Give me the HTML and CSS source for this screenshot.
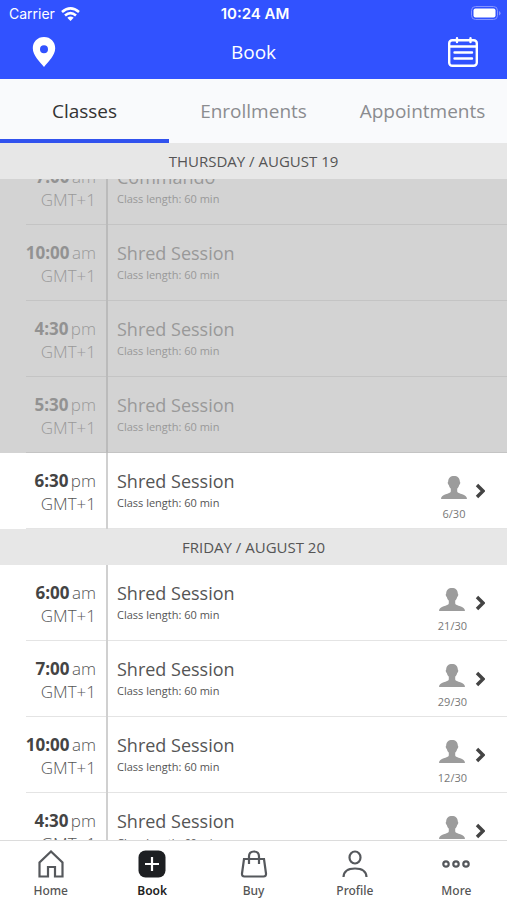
FILE: index.html
```
<!DOCTYPE html>
<html lang="en">

  <head>
    <meta charset="UTF-8">
    <meta name="viewport" content="width=device-width, initial-scale=1.0">
    <title>Book</title>
    <link rel="stylesheet" href="styles.css">
  </head>

  <body>
    <!-- icons used more than once -->
    <svg class="sprite" aria-hidden="true">
      <symbol id="person" viewBox="0 0 26 23">
        <path d="M13 0C9.500 0 7.200 2 7.200 5.500C6.300 6 6.800 8.600 7.800 9C8.100 10.600 8.800 11.700 9.800 12.600V15.500C9.300 18.300 0 17.600 0 23H26C26 17.600 16.700 18.300 16.200 15.500V12.600C17.200 11.700 17.900 10.600 18.200 9C19.200 8.600 19.700 6 18.800 5.500C18.800 2 16.500 0 13 0Z" fill="#9c9c9c"/>
      </symbol>
      <symbol id="arrow" viewBox="0 0 10 16">
        <path d="M2 2L8 8L2 14" fill="none" stroke="#444" stroke-width="3.400"/>
      </symbol>
    </svg>

    <header class="top">
      <div class="status">
        <div class="carrier">
          <span>Carrier</span>
          <svg width="19" height="14" viewBox="0 0 19 14" fill="none" stroke="#fff" stroke-width="2.600">
            <path d="M1 5Q9.500-2.200 18 5"/>
            <path d="M4 8.600Q9.500 3.800 15 8.600"/>
            <path d="M6.300 10.800Q9.500 8 12.700 10.800L9.500 13.900Z" fill="#fff" stroke="none"/>
          </svg>
        </div>
        <div class="clock">10:24 AM</div>
        <div class="battery">
          <svg width="30" height="15" viewBox="0 0 30 15">
            <rect x="0.500" y="0.500" width="26" height="13" rx="4" fill="none" stroke="#8494ff"/>
            <rect x="2.500" y="2.500" width="22" height="9" rx="2" fill="#fff"/>
            <path d="M28 5V9.500Q29.600 8.500 29.600 7.200T28 5Z" fill="#8494ff"/>
          </svg>
        </div>
      </div>
      <div class="titlebar">
        <button type="button" class="icon-btn" aria-label="Location">
          <svg width="24" height="30" viewBox="0 0 24 30">
            <path fill="#fff" fill-rule="evenodd" d="M12 0C5.400 0 0.800 4.900 0.800 11.200C0.800 18.500 8 25 12 30C16 25 23.200 18.500 23.200 11.200C23.200 4.900 18.600 0 12 0ZM12 8.300A4 4 0 1 1 12 16.300A4 4 0 1 1 12 8.300Z"/>
          </svg>
        </button>
        <h1>Book</h1>
        <button type="button" class="icon-btn" aria-label="Calendar">
          <svg width="30" height="30" viewBox="0 0 30 30" fill="none" stroke="#fff" stroke-width="2.400" stroke-linecap="round">
            <rect x="1.200" y="3.200" width="27.600" height="25.500" rx="3"/>
            <path d="M1 9.500H29M9 1.200V5M22.500 1.200V5M6.500 15.500H24M6.500 21.500H24"/>
          </svg>
        </button>
      </div>
    </header>

    <nav class="tabs">
      <a href="#classes" class="active">Classes</a>
      <a href="#enrollments">Enrollments</a>
      <a href="#appointments">Appointments</a>
    </nav>

    <main class="schedule">
      <section>
        <h2>Thursday / August 19</h2>
        <ul class="list scrolled">
          <li class="past">
            <div class="time"><p><b>7:00</b> am</p><p>GMT+1</p></div>
            <div class="info"><h3>Commando</h3><p>Class length: 60 min</p></div>
          </li>
          <li class="past">
            <div class="time"><p><b>10:00</b> am</p><p>GMT+1</p></div>
            <div class="info"><h3>Shred Session</h3><p>Class length: 60 min</p></div>
          </li>
          <li class="past">
            <div class="time"><p><b>4:30</b> pm</p><p>GMT+1</p></div>
            <div class="info"><h3>Shred Session</h3><p>Class length: 60 min</p></div>
          </li>
          <li class="past">
            <div class="time"><p><b>5:30</b> pm</p><p>GMT+1</p></div>
            <div class="info"><h3>Shred Session</h3><p>Class length: 60 min</p></div>
          </li>
          <li>
            <div class="time"><p><b>6:30</b> pm</p><p>GMT+1</p></div>
            <a class="info" href="#class"><h3>Shred Session</h3><p>Class length: 60 min</p></a>
            <div class="spots"><svg class="person"><use href="#person"/></svg><span>6/30</span></div>
            <svg class="arrow"><use href="#arrow"/></svg>
          </li>
        </ul>
      </section>

      <section>
        <h2>Friday / August 20</h2>
        <ul class="list">
          <li>
            <div class="time"><p><b>6:00</b> am</p><p>GMT+1</p></div>
            <a class="info" href="#class"><h3>Shred Session</h3><p>Class length: 60 min</p></a>
            <div class="spots"><svg class="person"><use href="#person"/></svg><span>21/30</span></div>
            <svg class="arrow"><use href="#arrow"/></svg>
          </li>
          <li>
            <div class="time"><p><b>7:00</b> am</p><p>GMT+1</p></div>
            <a class="info" href="#class"><h3>Shred Session</h3><p>Class length: 60 min</p></a>
            <div class="spots"><svg class="person"><use href="#person"/></svg><span>29/30</span></div>
            <svg class="arrow"><use href="#arrow"/></svg>
          </li>
          <li>
            <div class="time"><p><b>10:00</b> am</p><p>GMT+1</p></div>
            <a class="info" href="#class"><h3>Shred Session</h3><p>Class length: 60 min</p></a>
            <div class="spots"><svg class="person"><use href="#person"/></svg><span>12/30</span></div>
            <svg class="arrow"><use href="#arrow"/></svg>
          </li>
          <li>
            <div class="time"><p><b>4:30</b> pm</p><p>GMT+1</p></div>
            <a class="info" href="#class"><h3>Shred Session</h3><p>Class length: 60 min</p></a>
            <div class="spots"><svg class="person"><use href="#person"/></svg><span>10/30</span></div>
            <svg class="arrow"><use href="#arrow"/></svg>
          </li>
        </ul>
      </section>
    </main>

    <nav class="bottom">
      <a href="#home">
        <svg viewBox="0 0 28 28"><path d="M2.500 26.500V12.500L14 1.500L25.500 12.500V26.500H18V17H11V26.500Z"/></svg>
        <span>Home</span>
      </a>
      <a href="#book" class="active">
        <svg viewBox="0 0 28 28"><rect x="0.500" y="0.500" width="27" height="27" rx="7" fill="#1d1f22" stroke="none"/><path d="M14 7V21M7 14H21" stroke="#fff"/></svg>
        <span>Book</span>
      </a>
      <a href="#buy">
        <svg viewBox="0 0 28 28"><path d="M4 9H24L26 23.500Q26.300 26.500 23.500 26.500H4.500Q1.700 26.500 2 23.500ZM9 14V6.500Q9 1.500 14 1.500T19 6.500V14"/></svg>
        <span>Buy</span>
      </a>
      <a href="#profile">
        <svg viewBox="0 0 28 28"><ellipse cx="14" cy="7.500" rx="5.500" ry="6"/><path d="M2.500 27Q3 18.500 14 18.500T25.500 27"/></svg>
        <span>Profile</span>
      </a>
      <a href="#more">
        <svg viewBox="0 0 28 28"><circle cx="4" cy="14" r="2.700"/><circle cx="14" cy="14" r="2.700"/><circle cx="24" cy="14" r="2.700"/></svg>
        <span>More</span>
      </a>
    </nav>
  </body>

</html>
```
FILE: styles.css
```
* {
  box-sizing: border-box;
  margin: 0;
  padding: 0;
}

body {
  display: flex;
  flex-direction: column;
  height: 100vh;
  overflow: hidden;
  font-family: "Open Sans", "Noto Sans", sans-serif;
  color: #555;
  background: #fff;
}

a {
  color: inherit;
  text-decoration: none;
}

.sprite {
  display: none;
}

/* top bar */
.top {
  height: 79px;
  flex: none;
  color: #fff;
  background: #3152ff;
}

.status {
  display: grid;
  grid-template-columns: 1fr auto 1fr;
  align-items: center;
  height: 27px;
  padding: 0 6px 0 9px;
  font-family: Inter, sans-serif;
  font-size: 14px;
}

.carrier {
  display: flex;
  align-items: center;
  gap: 6px;
}

.clock {
  font-size: 15px;
  font-weight: 600;
}

.battery {
  display: flex;
  justify-content: flex-end;
}

.titlebar {
  display: flex;
  justify-content: space-between;
  align-items: center;
  height: 50px;
  padding: 0 29px;
}

.titlebar h1 {
  font-size: 19px;
  font-weight: 400;
}

.icon-btn {
  display: flex;
  justify-content: center;
  width: 30px;
  border: 0;
  background: none;
}

/* tabs */
.tabs {
  display: flex;
  flex: none;
  height: 64px;
  background: #f9fafc;
}

.tabs a {
  flex: 1;
  border-bottom: 4px solid transparent;
  font-size: 19px;
  line-height: 64px;
  text-align: center;
  color: #8b8c90;
}

.tabs .active {
  border-color: #3152ee;
  color: #333;
}

/* class list */
.schedule {
  flex: 1;
  min-height: 0;
  overflow-y: auto;
  scrollbar-width: none;
}

.schedule h2 {
  position: sticky;
  top: 0;
  z-index: 1;
  height: 36px;
  font-size: 15px;
  font-weight: 400;
  line-height: 36px;
  text-align: center;
  text-transform: uppercase;
  background: #e7e7e7;
}

.list {
  list-style: none;
}

/* first class is half under the day title */
.scrolled {
  margin-top: -30px;
}

.list li {
  display: flex;
  align-items: center;
  height: 76px;
  padding-right: 22px;
  background: linear-gradient(#e4e4e4, #e4e4e4) 26px 100% / 100% 1px no-repeat;
}

.list .past {
  color: #999;
  background-color: #d3d3d3;
  background-image: linear-gradient(#c4c4c4, #c4c4c4);
}

.time {
  flex: none;
  width: 108px;
  height: 100%;
  padding: 16px 10px 0 0;
  border-right: 2px solid #d0d0d0;
  font-size: 17px;
  font-weight: 300;
  line-height: 23px;
  text-align: right;
  white-space: nowrap;
}

.time b {
  margin-right: -2px;
  font-weight: 700;
  color: #444;
}

.past .time {
  border-color: #bbb;
}

.past .time b {
  color: #929292;
}

.info {
  flex: 1;
  align-self: flex-start;
  padding: 16px 0 0 9px;
}

.info h3 {
  font-size: 18px;
  font-weight: 400;
  line-height: 24px;
}

.info p {
  font-size: 11px;
  line-height: 20px;
}

.spots {
  display: flex;
  flex-direction: column;
  align-items: center;
  gap: 7px;
  padding-top: 16px;
  font-size: 11px;
  line-height: 16px;
  color: #777;
}

.person {
  width: 26px;
  height: 23px;
}

.arrow {
  width: 10px;
  height: 16px;
  margin-left: 8px;
}

/* bottom menu */
.bottom {
  display: flex;
  flex: none;
  height: 60px;
  border-top: 1px solid #dcdcdc;
  background: #fff;
}

.bottom a {
  display: flex;
  flex: 1;
  flex-direction: column;
  align-items: center;
  padding-top: 9px;
  font-family: "Noto Sans", sans-serif;
  font-size: 12px;
  font-weight: 500;
  line-height: 16px;
}

.bottom svg {
  width: 28px;
  height: 28px;
  margin-bottom: 5px;
  fill: none;
  stroke: #55585c;
  stroke-width: 2.2;
}

.bottom .active {
  font-weight: 600;
  color: #222;
}
```
